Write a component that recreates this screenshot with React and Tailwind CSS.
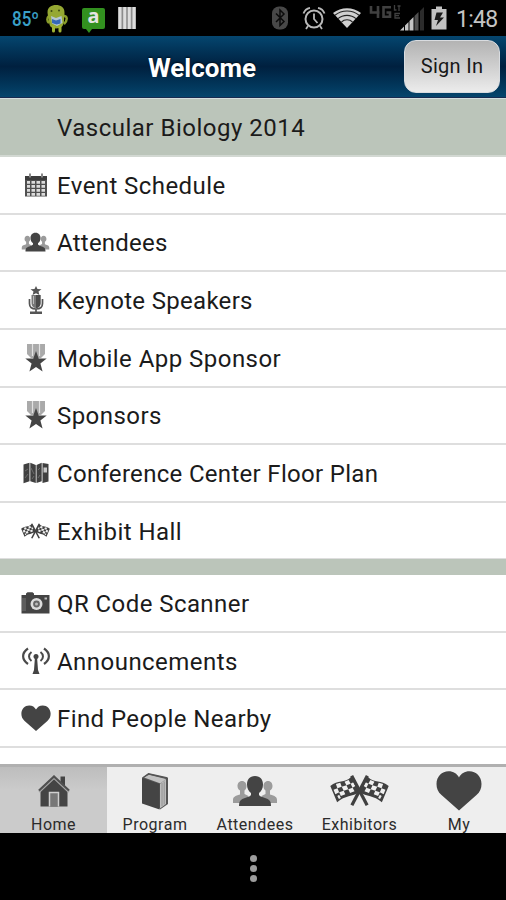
import React from 'react';

const PeopleIcon = ({ className }) => (
  <svg viewBox="0 0 46 32" className={className}>
    <g fill="#9b9b9b">
      <path d="M10 6c3 0 4.500 2.500 4.500 5 0 2-.8 3.500-2 4.600V19l4 2v7H1v-3c0-3 2-4 7-5.500v-4C6.500 14.500 5.500 13 5.500 11c0-2.500 1.500-5 4.500-5z" />
      <path d="M36 6c-3 0-4.500 2.500-4.500 5 0 2 .8 3.500 2 4.600V19l-4 2v7H45v-3c0-3-2-4-7-5.500v-4c1.500-1 2.500-2.500 2.500-4.500 0-2.500-1.500-5-4.500-5z" />
    </g>
    <path fill="#444" d="M23 1c5.500 0 8 4 8 8.500 0 3.800-1.600 6.800-4 8.500v2c1 1.500 3 2 6 3 4 1.300 6 2.500 6 8H7c0-5.500 2-6.700 6-8 3-1 5-1.500 6-3v-2c-2.400-1.700-4-4.700-4-8.500C15 5 17.500 1 23 1z" />
  </svg>
);

const Flag = () => (
  <>
    <path d="M.3 11.500C8 5 14 9.500 21 2.500l8 15C22 22.500 15 20.500 7 27.500z" fill="#404040" />
    <g fill="#f0f0f0">
      <path d="M5.800 9.500l4.300-1.200 1.400 4-4.200 1.400zM14.300 7.300l4-1.600 2 3.700-4.100 1.500zM3.500 15.200l3.800-1.500 1.700 4-3.700 2zM11.500 12.300l4.700-1.400 1.800 3.900-4.500 1.400zM20.300 9.400l2.600-1.600 2 3.800-2.700 1.600zM9 17.700l4.500-1.500 1.500 3.600-4.300 1.700zM18 14.800l4.200-1.600 1.900 3.500-4.400 1.800zM7.200 21.300l1.800-1 1.700 3-1.900 1z" />
    </g>
    <path d="M21.300 1.500L36.500 30.500" stroke="#404040" strokeWidth="3.200" />
  </>
);

const FlagsIcon = ({ className }) => (
  <svg viewBox="0 0 58 32" className={className}>
    <Flag />
    <g transform="translate(58 0) scale(-1 1)"><Flag /></g>
  </svg>
);

const HeartIcon = ({ className }) => (
  <svg viewBox="0 0 46 40" className={className}>
    <path fill="#444" d="M23 40L5.500 24.500C2 21.500.5 18 .5 13.500.5 6 6 .8 12.500.8c5 0 8.500 2.500 10.500 6.200C25 3.300 28.500.8 33.500.8c6.500 0 12 5.200 12 12.700 0 4.500-1.500 8-5 11z" />
  </svg>
);

const CalendarIcon = () => (
  <svg viewBox="0 0 24 24" className="h-6 w-6">
    <path d="M1 3h22v20.500H1z" fill="#505050" />
    <path d="M1 3h22v4H1z" fill="#3c3c3c" />
    <path d="M6 .5v4M18 .5v4" stroke="#888" strokeWidth="2" />
    {[8, 12, 16, 20].map((y) => (
      <path key={y} d={`M3 ${y}h3v2.700h-3zM7.500 ${y}h3.500v2.700h-3.500zM12.500 ${y}h3.500v2.700h-3.500zM17.500 ${y}h3.500v2.700h-3.500z`} fill="#dcdcdc" />
    ))}
  </svg>
);

const MicIcon = () => (
  <svg viewBox="0 0 16 28" className="h-7 w-4">
    <path d="M8 0l1.500 3 4 .2-3 2.300.9 3.500L8 7.200 4.600 9l.9-3.500-3-2.300 4-.2z" fill="#555" />
    <path d="M3.500 9h9v8.500a4.500 4.500 0 0 1-9 0z" fill="#777" />
    <path d="M8 9h4.500v8.500A4.500 4.500 0 0 1 8 22z" fill="#4a4a4a" />
    <path d="M5.500 10v8" stroke="#bbb" />
    <path d="M1.500 13v4.500C1.500 21 4 23 8 23s6.500-2 6.500-5.500V13M8 23v3.500" fill="none" stroke="#555" strokeWidth="1.700" />
    <path d="M2 25.500h12V28H2z" fill="#555" />
  </svg>
);

const MedalIcon = () => (
  <svg viewBox="0 0 22 28" className="h-7 w-[22px]">
    <path d="M2 0h18v10l-4 4H6l-4-4z" fill="#aaa" />
    <path d="M7.500 0v12M14.500 0v12" stroke="#e2e2e2" strokeWidth="1.200" />
    <path d="M11 7l2.700 7.500 8 .1-6.300 4.900 2.200 8-6.600-4.600-6.600 4.600 2.200-8-6.300-4.900 8-.1z" fill="#444" />
  </svg>
);

const MapIcon = () => (
  <svg viewBox="0 0 26 22" className="h-[22px] w-[26px]">
    <path d="M.5 2.500L6.500.8v18.500l-6 1.900zM7.300.8l5.500 2.200v18l-5.500-1.700zM13.500 3l5.200-2.200v18.500l-5.200 1.700zM19.500 1l6 1v17.500l-6 1.500z" fill="#404040" />
    <path d="M2 9l3-2M2 16l3-4M8 6l3 6M9 17l2-3M15 8l2-2M15 16l2-3" stroke="#6c6c6c" />
    <path d="M20.500 5.500h3.500v5h-3.500z" fill="#c8c8c8" />
  </svg>
);

const CameraIcon = () => (
  <svg viewBox="0 0 29 22" className="h-[22px] w-[29px]">
    <path d="M.5 3H5V1.500L6.500.3h5L13 1.500V3h15.500v18.500H.5z" fill="#444" />
    <path d="M2 6v13M4 6v13" stroke="#777" />
    <circle cx="15.500" cy="12" r="6" fill="#ddd" />
    <circle cx="15.500" cy="12" r="3.400" fill="#666" />
    <circle cx="15.500" cy="12" r="1.500" fill="#bbb" />
    <path d="M23.500 5.500h2.500v2h-2.500z" fill="#bbb" />
  </svg>
);

const AntennaIcon = () => (
  <svg viewBox="0 0 30 28" className="h-7 w-[30px]">
    <g fill="none" stroke="#4a4a4a" strokeWidth="2.200">
      <path d="M7 1.500C.5 6 .5 12.500 7 17M23 1.500c6.500 4.500 6.500 11 0 15.500" />
      <path d="M10.500 5C7.200 7.500 7.200 11.500 10.500 14M19.500 5c3.300 2.500 3.300 6.500 0 9" strokeWidth="2" />
    </g>
    <circle cx="15" cy="9.500" r="2.500" fill="#444" />
    <path d="M14 9.500h2l1 13.500 1.500 4h-7l1.500-4z" fill="#444" />
  </svg>
);

const HomeIcon = () => (
  <svg viewBox="0 0 32 32" className="h-8 w-8">
    <path d="M22.500 1.500H27v11l-4.500-4.500z" fill="#444" />
    <path d="M16 2.500L29.500 16v15.500h-27V16z" fill="#444" />
    <path d="M1 16.800L16 2.500l15 14.300" fill="none" stroke="#a8a8a8" strokeWidth="2.600" />
    <path d="M1 15.500L16 1.500l15 14" fill="none" stroke="#505050" strokeWidth="2.200" />
    <path d="M11.500 31.500v-14h9v14" fill="#777" stroke="#cfcfcf" strokeWidth="1.500" />
  </svg>
);

const BookIcon = () => (
  <svg viewBox="0 0 28 38" className="h-[38px] w-7">
    <path d="M1 6l6.500-4.500L27 6v26l-8 5.500z" fill="#555" />
    <path d="M3 5.500L8 2.800 25 7l-5.500 4.500z" fill="#c2c2c2" />
    <path d="M19 12l6-5v25l-6 4.500z" fill="#bdbdbd" />
    <path d="M21 11v23M23.200 9.500v23" stroke="#888" strokeWidth=".8" />
    <path d="M1 6l17.500 6v25.500L1 31.500z" fill="#444" />
    <path d="M1.500 6l6-4.200L26.500 6" fill="none" stroke="#555" strokeWidth="1.300" />
  </svg>
);

const sections = [
  [
    { label: 'Event Schedule', icon: <CalendarIcon />, tracking: 'tracking-[0.42px]' },
    { label: 'Attendees', icon: <PeopleIcon className="h-5 w-[29px]" />, tracking: 'tracking-[0.24px]' },
    { label: 'Keynote Speakers', icon: <MicIcon />, tracking: 'tracking-[0.31px]' },
    { label: 'Mobile App Sponsor', icon: <MedalIcon />, tracking: 'tracking-[0.46px]' },
    { label: 'Sponsors', icon: <MedalIcon />, tracking: 'tracking-[0.44px]' },
    { label: 'Conference Center Floor Plan', icon: <MapIcon />, tracking: 'tracking-[0.31px]' },
    { label: 'Exhibit Hall', icon: <FlagsIcon className="h-4 w-[29px]" />, tracking: 'tracking-[0.46px]' },
  ],
  [
    { label: 'QR Code Scanner', icon: <CameraIcon />, tracking: 'tracking-[0.43px]' },
    { label: 'Announcements', icon: <AntennaIcon />, tracking: 'tracking-[0.46px]' },
    { label: 'Find People Nearby', icon: <HeartIcon className="h-[26px] w-[30px]" />, tracking: 'tracking-[0.42px]' },
  ],
];

const tabs = [
  { label: 'Home', icon: <HomeIcon />, width: 'w-[107px] bg-linear-to-b from-[#bdbdbd] to-[#cbcbcb] to-35%' },
  { label: 'Program', icon: <BookIcon />, width: 'w-[96px]' },
  { label: 'Attendees', icon: <PeopleIcon className="h-8 w-[46px]" />, width: 'w-[104px]' },
  { label: 'Exhibitors', icon: <FlagsIcon className="h-[33px] w-[59px]" />, width: 'w-[105px]' },
  { label: 'My', icon: <HeartIcon className="h-[41px] w-[46px]" />, width: 'w-[94px]' },
];

const MenuRow = ({ label, icon, tracking }) => (
  <div className="flex h-[57.65px] shrink-0 items-center border-b-2 border-[#dedede] bg-white pl-5">
    <div className="flex w-[31px] justify-center">{icon}</div>
    <span className={`ml-1.5 pt-[2px] text-[24px] leading-7 whitespace-nowrap text-[#1b1b1b] ${tracking}`}>{label}</span>
  </div>
);

const StatusBar = () => (
  <div className="flex h-9 shrink-0 items-center bg-black pl-3">
    <div className="w-[34px] pt-1">
      <span className="inline-block origin-left scale-x-85 text-[20px] leading-6 font-medium text-[#3aa0c8]">85º</span>
    </div>
    <svg viewBox="0 0 22 30" className="h-[30px] w-[22px]">
      <path d="M3 13C.8 15 .8 18 3 20M17 13c5-1 4.500 5 1 8" fill="none" stroke="#8a9d2b" strokeWidth="2.500" />
      <path d="M1.500 9.500C1.500 4 5.500 2 10 2s8.500 2 8.500 7.500c0 3-.5 5-.5 8 0 5-2.500 8-8 8s-7-3-7-8c0-3-1.500-5-1.500-8z" fill="#95a832" />
      <path d="M7.500 24v4M14 24v4" stroke="#9fb233" strokeWidth="3" strokeLinecap="round" />
      <circle cx="5.500" cy="8" r="1" fill="#3c4a12" />
      <circle cx="13" cy="7.500" r="1" fill="#3c4a12" />
      <path d="M5 13l5 2 5.500-2 1 7-5.500 3-5-2.500z" fill="#b4c6d0" />
      <path d="M6 16l4 1.500 4.500-1.500v4.500l-4 1-4.500-1.500z" fill="#3568b8" />
    </svg>
    <div className="relative ml-3.5 flex h-[21px] w-[23px] items-center justify-center rounded-xs bg-[#32901f] text-[20px] leading-none font-bold text-[#e4e4e4] after:absolute after:-bottom-1 after:left-1 after:border-x-3 after:border-t-4 after:border-x-transparent after:border-t-[#32901f]">
      <span className="-mt-1 font-['Noto_Sans',sans-serif]">a</span>
    </div>
    <svg viewBox="0 0 18 22" className="ml-[13px] h-[22px] w-[18px]">
      <path d="M0 0h18v22H0z" fill="#8c8c8c" />
      <path d="M2 0v22M6.700 0v22M11.300 0v22M16 0v22" stroke="#ddd" strokeWidth="3" />
    </svg>
    <svg viewBox="0 0 16 24" className="ml-[136px] h-6 w-4">
      <rect width="16" height="23" y=".5" rx="7" fill="#484848" />
      <path d="M4 7.500l8 8-4 4V4l4 4-8 8" fill="none" stroke="#0b0b0b" strokeWidth="1.500" />
    </svg>
    <svg viewBox="0 0 24 24" className="ml-3.5 h-6 w-6" fill="none" stroke="#b8b8b8">
      <circle cx="12" cy="13" r="8.500" strokeWidth="2" />
      <path d="M12 7.500V13l3.500 4" strokeWidth="1.800" />
      <path d="M1.500 7.500C2.500 4.500 4.500 2.500 8 1.800M22.500 7.500C21.500 4.500 19.500 2.500 16 1.800M6 20l-2 3M18 20l2 3" strokeWidth="1.800" />
    </svg>
    <svg viewBox="0 0 28 20" className="ml-[7px] h-5 w-7">
      <path d="M0 5C8-1.500 20-1.500 28 5L14 20z" fill="#d0d0d0" />
      <path d="M2 7.200c7-5.700 17-5.700 24 0M5 10.700c5-4.500 13-4.500 18 0M8.500 14c3-3 8-3 11 0" fill="none" stroke="#222" strokeWidth="1.100" />
    </svg>
    <div className="-mt-3 ml-[8px] flex w-[32px] items-start text-[#404040]">
      <svg viewBox="0 0 32 14" className="h-3.5 w-8" fill="none" stroke="currentColor" strokeWidth="2.600">
        <path d="M2 1v6.500h8.500M9 1v12M22 2.200h-7.500v9.500h6.500V7.500H17.500" />
        <path d="M25.500 0v5h2M28.500 1h3M30 1v5M31 8.500h-5v4.500h5M26 10.700h4" strokeWidth="1.300" />
      </svg>
    </div>
    <svg viewBox="0 0 26 24" className="-ml-0.5 mt-0.5 h-6 w-[26px]">
      <path d="M1 23.500l4-4v4zM6 18.500l3.500-3.500v8.500H6zM10.500 14l4-4v13.500h-4z" fill="#c4c4c4" />
      <path d="M15.500 9l4-4v18.500h-4z" fill="#505050" />
      <path d="M21 4l4-4v23.500h-4z" fill="#2b2b2b" />
    </svg>
    <svg viewBox="0 0 16 24" className="ml-1.5 h-6 w-4">
      <path d="M5 .5h6V3h4.500v20.500H.5V3H5z" fill="#c2c2c2" />
      <path d="M5.500 6.500h6.500l-3 5h4L5 20l2-6H3.500z" fill="#1a1a1a" />
    </svg>
    <span className="ml-[9px] pt-1 text-[23px] leading-7 tracking-[-0.7px] text-[#c4c4c4]">1:48</span>
  </div>
);

const App = () => {
  return (
    <div className="flex h-[900px] w-[506px] flex-col overflow-hidden bg-white font-[Roboto,sans-serif]">
      <StatusBar />

      {/* Title bar */}
      <div className="grid h-[62px] shrink-0 grid-cols-[404px_1fr] items-center border-b border-[#182b50] bg-linear-to-b from-[#05466f] via-[#00203f] to-[#05456d]">
        <h1 className="pt-0.5 text-center text-[26px] leading-8 font-bold text-white [text-shadow:0_-1px_2px_#000a]">Welcome</h1>
        <button className="h-[53px] w-24 rounded-[12px] border border-[#d9dce0] bg-linear-to-b from-[#b3b3b3] to-[#ececec] pb-0.5 text-[20px] tracking-[0.3px] text-[#181818]">
          Sign In
        </button>
      </div>

      <div className="flex h-[666px] shrink-0 flex-col overflow-hidden">
        <div className="flex h-[59px] shrink-0 items-center border-t border-b-2 border-t-[#d3dfdf] border-b-[#d2d8d2] bg-[#bbc5ba] pt-0.5 pl-[57px] text-[24px] tracking-[0.5px] text-[#1b1b1b]">
          Vascular Biology 2014
        </div>
        {sections[0].map((item) => (
          <MenuRow key={item.label} {...item} />
        ))}
        <div className="-mt-[1.5px] h-[16.200px] shrink-0 bg-[#bbc5ba]" />
        {sections[1].map((item) => (
          <MenuRow key={item.label} {...item} />
        ))}
      </div>

      {/* Bottom tabs */}
      <div className="flex h-[69px] shrink-0 overflow-hidden border-t-[3px] border-[#b0b0b0] bg-[#eeeeee]">
        {tabs.map(({ label, icon, width }) => (
          <div key={label} className={`flex shrink-0 flex-col items-center ${width}`}>
            <div className="flex h-[47px] shrink-0 items-center">{icon}</div>
            <span className="mt-px text-[16px] leading-5 tracking-[0.5px] text-[#2b2b2b]">{label}</span>
          </div>
        ))}
      </div>

      <div className="flex flex-1 flex-col items-center justify-center gap-[3px] bg-black pt-1">
        <i className="size-[7px] rounded-full bg-[#9d9d9d]" />
        <i className="size-[7px] rounded-full bg-[#9d9d9d]" />
        <i className="size-[7px] rounded-full bg-[#9d9d9d]" />
      </div>
    </div>
  );
};

export default App;
